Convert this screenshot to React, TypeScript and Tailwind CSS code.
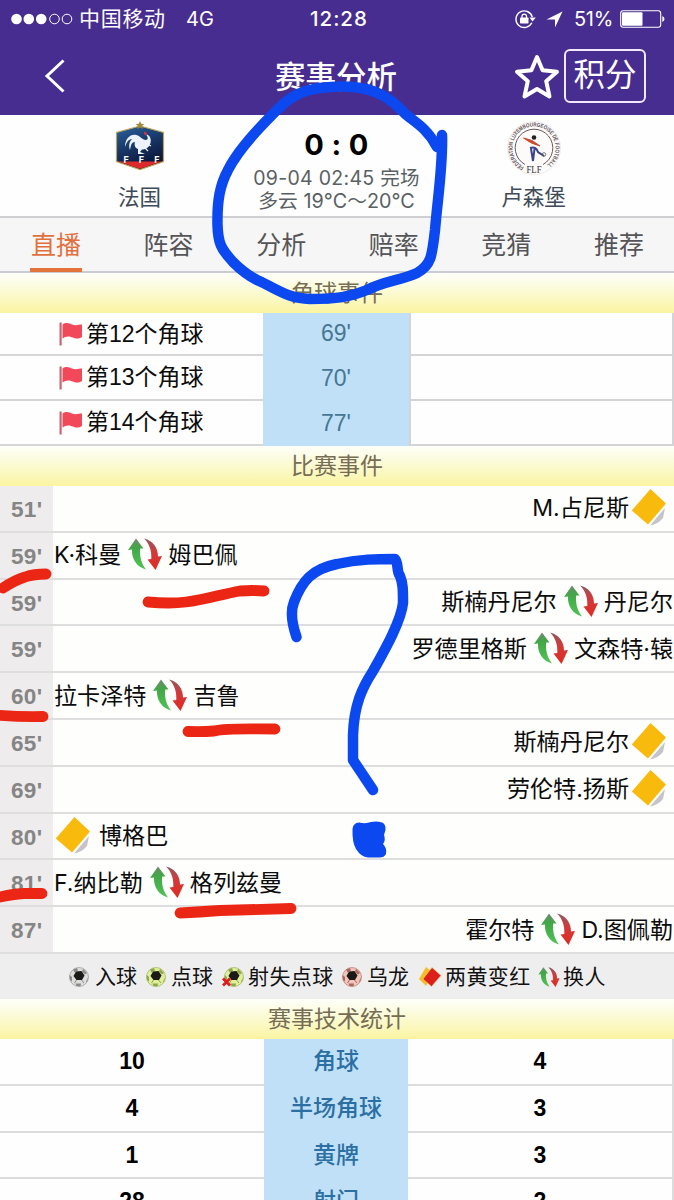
import React from 'react';

const SANS = "font-['Liberation_Sans','Noto_Sans_CJK_SC',sans-serif]";

function SwapIcon({ className }: { className: string }) {
  return (
    <svg viewBox="0 0 34 32" className={className}>
      <defs>
        <linearGradient id="swapGreen" x1="0" y1="0" x2="0" y2="1">
          <stop offset="0" stopColor="#6f8a70" />
          <stop offset="0.3" stopColor="#43a648" />
          <stop offset="1" stopColor="#4fc455" />
        </linearGradient>
        <linearGradient id="swapRed" x1="0" y1="0" x2="0" y2="1">
          <stop offset="0" stopColor="#8d5a62" />
          <stop offset="0.4" stopColor="#cf3b3d" />
          <stop offset="1" stopColor="#e22a20" />
        </linearGradient>
      </defs>
      <path d="M8 0.500L15.500 10.500H12.200C11.500 18 13 25 18 31.500C9 29 3.500 21.500 4 11.500L0 12Z" fill="url(#swapGreen)" />
      <path d="M16 0.500C25 2.500 30 9.500 30 18.500L34 18L27.500 32L19.500 21.500L23.300 21C23.800 12.500 21.500 6 16 0.500Z" fill="url(#swapRed)" />
    </svg>
  );
}

function Swap() {
  return <SwapIcon className="ml-[7px] mr-[6px] h-[32px] w-[34px] shrink-0 -translate-y-[1px]" />;
}

function CardIcon() {
  return (
    <svg viewBox="0 0 36 40" className="h-[40px] w-[36px] shrink-0">
      <path d="M19 37.500L34 20L32 30Q27 36 19 37.500Z" fill="#8f8799" opacity="0.5" />
      <path d="M19 2L35.500 16.500L17.500 38.500L1 24Z" fill="#fffdf4" />
      <path d="M19.500 1L35 15.500L17 36.500L0.800 22.500Z" fill="#f8ba0d" />
    </svg>
  );
}

function BallIcon({ tint, edge, missed }: { tint: string; edge: string; missed?: boolean }) {
  return (
    <svg viewBox="0 0 22 22" className="h-[22px] w-[22px] shrink-0 overflow-visible">
      <circle cx="11" cy="11" r="9.500" fill={tint} stroke={edge} strokeOpacity="0.6" strokeWidth="1" />
      <path d="M5 3.500L9 2L10 4.500L6.500 6.500ZM15 2.800L19 7L17 8.500L14 5.500ZM1.500 9L4 11L4 15.500L2 14ZM20.300 11L18 15.500L19 16ZM7.500 17.500L13 17.500L12.500 20.300L8.500 20Z" fill={edge} />
      <path d="M8 5.500L13.500 5L16.500 9.500L14 14L8.500 14L5.500 10Z" fill="#1c1a16" />
      <path d="M13.500 14L16 17M8.500 14L6.500 17" stroke={edge} strokeWidth="1" />
      {missed && <path d="M0 12.500L7 19.500M7 12.500L0 19.500" stroke="#e01b1b" strokeWidth="2.800" />}
    </svg>
  );
}

function DoubleCard() {
  return (
    <svg viewBox="0 0 24 22" className="h-[22px] w-[24px] shrink-0">
      <path d="M8 1L14 6L8 20L1 13Z" fill="#f6bd25" />
      <path d="M14 1.500L23 9.500L13.500 20.500L5 13Z" fill="#dd1f1c" stroke="#f6cf6a" strokeWidth="0.600" />
    </svg>
  );
}

function Flag() {
  return (
    <svg viewBox="0 0 26 26" className="h-[26px] w-[26px] shrink-0">
      <rect x="1.500" y="1.500" width="2.200" height="23" fill="#c96570" />
      <path d="M4.500 3.500C8 0.800 11 2 14 3.500C18 5 21 3.500 24 3.500V16C20 18.500 17 17.500 13 16C9.500 15 7 16 4.500 17.500Z" fill="#f2495a" />
    </svg>
  );
}

function FranceCrest() {
  return (
    <svg viewBox="0 0 50 50" className="h-[50px] w-[50px]">
      <defs>
        <linearGradient id="crest" x1="0" y1="0" x2="0.4" y2="1">
          <stop offset="0" stopColor="#2a63a0" />
          <stop offset="0.55" stopColor="#173565" />
          <stop offset="1" stopColor="#0c1538" />
        </linearGradient>
      </defs>
      <path d="M25 5L48.500 11.500V40.500L25 48.500L1.500 40.500V11.500Z" fill="url(#crest)" stroke="#b9a55a" strokeWidth="1.200" />
      <path d="M3 40.500H47L25 47.800Z" fill="#dd2a2a" />
      <path d="M25 0L26.200 2.800L29.200 3L27 5L27.700 8L25 6.400L22.300 8L23 5L20.800 3L23.800 2.800Z" fill="#a08a3c" />
      <path d="M10 26C10 18 15 13 21 14C25 14.500 27 19 31 19C33 19 33.500 16 31 13.500C35 14 36.500 18 35.500 22C34 27 30 28.500 27 28.500L25 31L30 33H23V28C20 27 19 24 20 21C16 21 16 25 15 29C13.500 25 14 21 17 18C13 18 11.500 22 10 26Z" fill="#eef3fb" />
      <path d="M29 10.500L32 12L31.500 15L29 13Z" fill="#d6324a" />
      <path d="M30 22L36 25M28 25L33 30" stroke="#eef3fb" strokeWidth="1.200" />
      <text x="26.500" y="41.500" textAnchor="middle" fontSize="9" fontWeight="700" textLength="36" fill="#fff" fontFamily="Inter">FFF</text>
    </svg>
  );
}

function LuxembourgCrest() {
  return (
    <svg viewBox="0 0 56 56" className="h-[56px] w-[56px]">
      <defs>
        <path id="ring" d="M18 47A21.500 21.500 0 1 1 38 47" />
      </defs>
      <circle cx="28" cy="28" r="26.500" fill="#fcfbfa" stroke="#ece7e8" strokeWidth="0.800" />
      <path d="M19 44.500A18.800 18.800 0 1 1 37 44.500" fill="none" stroke="#56484c" strokeWidth="0.900" />
      <text fontSize="5.800" fontWeight="700" fill="#5e5157" fontFamily="Liberation Sans">
        <textPath href="#ring" textLength="110" lengthAdjust="spacingAndGlyphs">FEDERATION LUXEMBOURGEOISE DE FOOTBALL</textPath>
      </text>
      <circle cx="28" cy="17.500" r="2.300" fill="#222" />
      <path d="M17.500 18Q26 19 34 26Q25 24 17.500 18Z" fill="#cf4a30" stroke="#cf4a30" />
      <path d="M24 28Q30 26 32 32L38 36M25 28.500L27 41L28.500 29" fill="none" stroke="#39438a" strokeWidth="2" />
      <circle cx="38" cy="34.500" r="1.800" fill="none" stroke="#555" strokeWidth="0.800" />
      <text x="28" y="53" textAnchor="middle" fontSize="11" fill="#3b3134" fontFamily="Liberation Serif" textLength="15" lengthAdjust="spacingAndGlyphs">FLF</text>
    </svg>
  );
}

function StatusBar() {
  return (
    <div className="flex h-[38px] items-center pl-[11px] font-['Inter','Noto_Sans_CJK_SC',sans-serif] text-white">
      <svg viewBox="0 0 62 12" className="h-[12px] w-[62px] shrink-0">
        {[5.5, 17.8, 30.2].map((x) => <circle key={x} cx={x} cy="6" r="5.300" fill="#fff" />)}
        {[43.5, 56].map((x) => <circle key={x} cx={x} cy="6" r="4.800" fill="none" stroke="#fff" strokeWidth="1" />)}
      </svg>
      <span className="ml-[6px] w-[107px] whitespace-nowrap text-[21px] tracking-[0.7px]">中国移动</span>
      <span className="w-[124px] text-[20px]">4G</span>
      <span className="w-[204px] text-[20.5px] font-medium tracking-[1px]">12:28</span>
      <svg viewBox="0 0 22 20" className="h-[20px] w-[22px] shrink-0">
        <path d="M17.800 13.800A8.300 8.300 0 1 1 18.300 8" fill="none" stroke="#fff" strokeWidth="1.400" />
        <path d="M15.500 8.500H21.800L18.500 12.500Z" fill="#fff" />
        <rect x="6" y="8.500" width="8.500" height="6" rx="0.800" fill="#fff" />
        <path d="M8 9V7.300A2.250 2.250 0 0 1 12.500 7.300V9" fill="none" stroke="#fff" strokeWidth="1.300" />
      </svg>
      <svg viewBox="0 0 17 17" className="ml-[10px] h-[17px] w-[17px] shrink-0">
        <path d="M16.500 0.500L9 16.500V8.500H0.500Z" fill="#fff" />
      </svg>
      <span className="ml-[11px] w-[46px] text-[20px] tracking-[-0.3px]">51%</span>
      <svg viewBox="0 0 45 18" className="h-[18px] w-[45px] shrink-0">
        <rect x="0.700" y="0.700" width="40" height="16.600" rx="2.500" fill="none" stroke="#fff" strokeWidth="1.100" />
        <rect x="2" y="2.200" width="20.500" height="13.600" rx="1" fill="#fff" />
        <path d="M42.300 6Q44.500 7 44.500 9Q44.500 11 42.300 12Z" fill="#fff" />
      </svg>
    </div>
  );
}

function NavBar() {
  return (
    <div className="flex h-[77px] items-center text-white">
      <svg viewBox="0 0 22 36" className="ml-[43px] h-[36px] w-[22px] shrink-0 -translate-y-[1px]">
        <path d="M20.500 2.500L4 18L20.500 33.500" fill="none" stroke="#fff" strokeWidth="3" />
      </svg>
      <h1 className="ml-[210px] w-[239px] whitespace-nowrap text-[30.5px] font-medium leading-[36px]">赛事分析</h1>
      <svg viewBox="0 0 46 46" className="h-[46px] w-[46px] shrink-0">
        <path d="M23 3L28.600 16.300L43 17.700L32.200 27.200L35.500 42.500L23 35L10.500 42.500L13.800 27.200L3 17.700L17.400 16.300Z" fill="none" stroke="#fff" strokeWidth="4" strokeLinejoin="round" />
      </svg>
      <button className="ml-[4px] flex h-[54px] w-[82px] -translate-y-[1px] items-center justify-center rounded-[6px] border-2 border-[#f0e8ff] text-[31.5px] leading-none">积分</button>
    </div>
  );
}

function MatchHeader() {
  return (
    <section className="flex h-[103px] border-b-2 border-[#cfcfd1] bg-[#fdfefd] text-[#3f4b58]">
      <div className="flex w-[214px] flex-col items-center pl-[65px]">
        <div className="mt-[6px] h-[62px]"><FranceCrest /></div>
        <div className="text-[21.5px] leading-[30px]">法国</div>
      </div>
      <div className="w-[245px] pt-[10px] text-center font-['Inter','Noto_Sans_CJK_SC',sans-serif] text-[#5a5f63]">
        <div className="text-[29px] font-bold leading-[40px] tracking-[0.4px] text-black">0 : 0</div>
        <div className="text-[19.5px] leading-[26px] tracking-[0.3px]">09-04 02:45 完场</div>
        <div className="flex justify-center whitespace-nowrap text-[19.8px] leading-[21px]">多云 19°C～20°C</div>
      </div>
      <div className="flex w-[149px] flex-col items-center">
        <div className="mt-[5px] h-[63px]"><LuxembourgCrest /></div>
        <div className="text-[21.5px] leading-[30px]">卢森堡</div>
      </div>
    </section>
  );
}

const tabs = ['直播', '阵容', '分析', '赔率', '竞猜', '推荐'];

function Tabs() {
  return (
    <nav className="flex h-[55px] justify-between border-b-2 border-[#cbcbd2] bg-[#f6f6f7] pl-[30px] pr-[29px] text-[25px] text-[#555456]">
      {tabs.map((t, i) => (
        <span key={t} className={i === 0 ? 'flex h-[54px] w-[52px] justify-center border-b-4 border-[#e4733c] leading-[54px] text-[#e0713f]' : 'flex w-[52px] justify-center leading-[54px]'}>{t}</span>
      ))}
    </nav>
  );
}

function SectionTitle({ children }: { children: React.ReactNode }) {
  return (
    <h2 className="h-[40px] shrink-0 bg-linear-to-b from-[#fefffa] via-[#fbfad0] to-[#fbf4a0] text-center text-[23px] leading-[41px] text-[#766d54]">{children}</h2>
  );
}

const corners = [
  { no: 12, at: "69'" },
  { no: 13, at: "70'" },
  { no: 14, at: "77'" },
];

type Incident = { at: string; side: 'home' | 'away'; kind: 'card' | 'swap'; a: string; b?: string };

const incidents: Incident[] = [
  { at: "51'", side: 'away', kind: 'card', a: 'M.占尼斯' },
  { at: "59'", side: 'home', kind: 'swap', a: 'K·科曼', b: '姆巴佩' },
  { at: "59'", side: 'away', kind: 'swap', a: '斯楠丹尼尔', b: '丹尼尔' },
  { at: "59'", side: 'away', kind: 'swap', a: '罗德里格斯', b: '文森特·辕' },
  { at: "60'", side: 'home', kind: 'swap', a: '拉卡泽特', b: '吉鲁' },
  { at: "65'", side: 'away', kind: 'card', a: '斯楠丹尼尔' },
  { at: "69'", side: 'away', kind: 'card', a: '劳伦特.扬斯' },
  { at: "80'", side: 'home', kind: 'card', a: '博格巴' },
  { at: "81'", side: 'home', kind: 'swap', a: 'F.纳比勒', b: '格列兹曼' },
  { at: "87'", side: 'away', kind: 'swap', a: '霍尔特', b: 'D.图佩勒' },
];

function IncidentRow({ item }: { item: Incident }) {
  const home = item.side === 'home';
  return (
    <div className="flex h-[46.8px] border-b-2 border-[#dedede] bg-[#fefefd]">
      <div className="w-[53px] shrink-0 bg-[#eeecec] pl-[11px] text-[22.5px] font-bold leading-[47px] tracking-[0.3px] text-[#858585]">{item.at}</div>
      <div className={(home ? 'justify-start pl-[1px]' : 'justify-end pr-[1px]') + " flex flex-1 items-center whitespace-nowrap font-['Inter','Noto_Sans_CJK_SC',sans-serif] text-[23.1px] leading-[44px] text-[#0c0c0c]"}>
        {item.kind === 'swap' && (<><span>{item.a}</span><Swap /><span>{item.b}</span></>)}
        {item.kind === 'card' && home && (<><span className="ml-[1px] mr-[8px]"><CardIcon /></span><span>{item.a}</span></>)}
        {item.kind === 'card' && !home && (<><span>{item.a}</span><span className="ml-[2px] mr-[6px]"><CardIcon /></span></>)}
      </div>
    </div>
  );
}

function Legend() {
  return (
    <div className="flex h-[45px] shrink-0 items-center whitespace-nowrap bg-[#efeeef] pl-[68px] pt-[1px] text-[21px] text-[#111]">
      <div className="flex w-[77px] items-center gap-[5px]"><BallIcon tint="#dededf" edge="#8a8a8a" />入球</div>
      <div className="flex w-[77px] items-center gap-[4px]"><BallIcon tint="#dfef9a" edge="#8fa550" />点球</div>
      <div className="flex w-[119px] items-center gap-[3px] pl-[1px]"><BallIcon tint="#dfef9a" edge="#8fa550" missed /><span className="tracking-[0.4px]">射失点球</span></div>
      <div className="flex w-[77px] items-center gap-[4px]"><BallIcon tint="#f3c4bb" edge="#a86a60" />乌龙</div>
      <div className="flex w-[120px] items-center gap-[3px]"><DoubleCard /><span className="tracking-[0.4px]">两黄变红</span></div>
      <div className="flex items-center gap-[3px]"><SwapIcon className="h-[20px] w-[22px] shrink-0" /><span className="tracking-[0.4px]">换人</span></div>
    </div>
  );
}

const stats = [
  { home: 10, label: '角球', away: 4 },
  { home: 4, label: '半场角球', away: 3 },
  { home: 1, label: '黄牌', away: 3 },
  { home: 28, label: '射门', away: 2 },
];

function PenMarks() {
  return (
    <svg viewBox="0 0 674 1200" className="pointer-events-none absolute left-0 top-0 h-[1200px] w-[674px]" fill="none" strokeLinecap="round" strokeLinejoin="round">
      <g stroke="#0c48f0" strokeWidth="10.500">
        <path d="M442 135C443 165 438 195 435 230C432 257 431 265 417 273C402 280 384 281 367 290C350 297 337 299 310 299C287 298 281 291 257 280C247 275 240 269 233 262C221 249 218 243 217.500 225C217 200 220 185 228 170C237 152 255 132 272 115C289 97 299 91 320 88C350 84 372 88 387 98C400 106 402 112 409 117C420 125 429 132 437 147L441 141" />
        <path d="M296.500 637C292 624 290 612 294 602C302 581 312 569 337 564C359 559 378 559 395 559C399 564 396 570 400 576C403 583 403 590 403 603C401 622 383 653 373 671C362 688 354 705 353 735V760L373 790" />
      </g>
      <path d="M359 822.500Q366 824 371 822Q377 821 382 822.500Q386 824 385.500 830L384 835Q386 840 383 844Q387 848 386 854Q384 858 378 857.500H368Q361 857 356 849Q352 842 352.500 829Q353 823 359 822.500Z" fill="#0c48f0" />
      <g stroke="#ec2614" strokeWidth="10.800">
        <path d="M3 588Q15 580 25 577Q34 574 46 574" />
        <path d="M148 602Q170 604 186 602C205 600 222 594 240 591Q252 590 264 591" />
        <path d="M-4 715Q20 717 43 716.500" />
        <path d="M188 731.500Q203 732 214 731C228 728 244 729 275 729" />
        <path d="M-4 898Q12 894 24 893.500H42" />
        <path d="M180 913Q200 912 220 910.500L291 908.500" />
      </g>
    </svg>
  );
}

export default function App() {
  return (
    <main className={`relative flex h-[1200px] w-[674px] flex-col overflow-hidden bg-[#fefefe] ${SANS}`}>
      <header className="h-[115px] shrink-0 bg-[#472d8f]">
        <StatusBar />
        <NavBar />
      </header>
      <div className="shrink-0"><MatchHeader /><Tabs /></div>
      <SectionTitle>角球事件</SectionTitle>
      <div className="shrink-0">
        {corners.map((c, i) => (
          <div key={c.no} className={(i === 0 ? 'h-[43px] leading-[40px]' : 'h-[45px] leading-[45px]') + ' flex text-[23px] text-[#0c0c0c]'}>
            <div className="flex w-[263px] items-center border-b-2 border-[#d8d5d8] pl-[58px]"><Flag /><span className="ml-[2px] whitespace-nowrap">第{c.no}个角球</span></div>
            <div className="w-[146px] bg-[#bfe0f7] text-center text-[#477794]">{c.at}</div>
            <div className="flex-1 border-x-2 border-b-2 border-[#d4d4d6]" />
          </div>
        ))}
      </div>
      <SectionTitle>比赛事件</SectionTitle>
      <div className="shrink-0">
        {incidents.map((item, i) => <IncidentRow key={i} item={item} />)}
      </div>
      <Legend />
      <SectionTitle>赛事技术统计</SectionTitle>
      <div className="shrink-0">
        {stats.map((s) => (
          <div key={s.label} className="flex h-[46.8px] text-[23px] leading-[45px]">
            <div className="w-[264px] border-b-2 border-[#dcdcdc] text-center font-bold text-black">{s.home}</div>
            <div className="w-[144px] bg-[#bfe0f7] text-center font-medium text-[#2c6fa3]">{s.label}</div>
            <div className="flex-1 border-b-2 border-r-2 border-[#dcdcdc] text-center font-bold text-black">{s.away}</div>
          </div>
        ))}
      </div>
      <PenMarks />
    </main>
  );
}
